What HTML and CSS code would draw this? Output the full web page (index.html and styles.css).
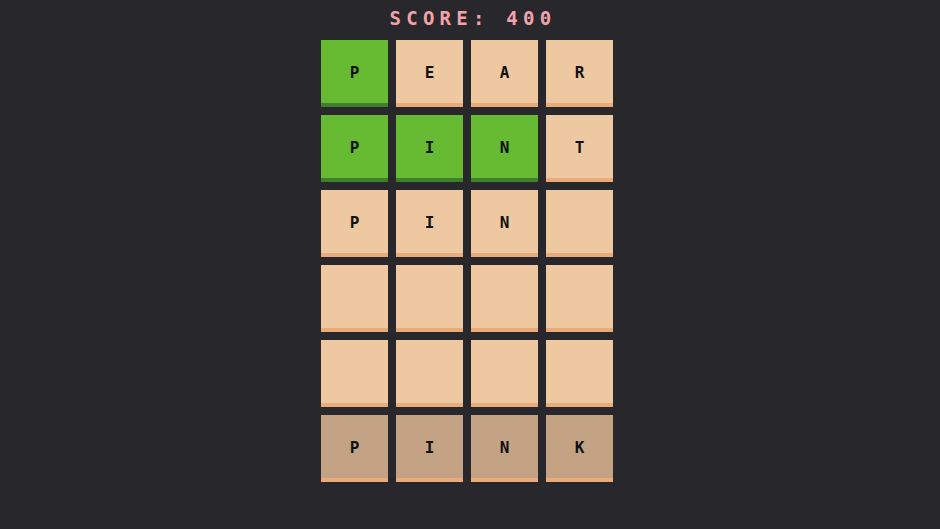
FILE: index.html
```html
<html>
  <head>
    <link rel="stylesheet" href="styles.css">
  </head>
  <body>
    <div class="game">
      <div class="score">SCORE: 400</div>
      <div class="board">
        <div class="tile hit">P</div>
        <div class="tile">E</div>
        <div class="tile">A</div>
        <div class="tile">R</div>

        <div class="tile hit">P</div>
        <div class="tile hit">I</div>
        <div class="tile hit">N</div>
        <div class="tile">T</div>

        <div class="tile">P</div>
        <div class="tile">I</div>
        <div class="tile">N</div>
        <div class="tile"></div>

        <div class="tile"></div>
        <div class="tile"></div>
        <div class="tile"></div>
        <div class="tile"></div>

        <div class="tile"></div>
        <div class="tile"></div>
        <div class="tile"></div>
        <div class="tile"></div>

        <!-- 入力中の行 -->
        <div class="tile input">P</div>
        <div class="tile input">I</div>
        <div class="tile input">N</div>
        <div class="tile input">K</div>
      </div>
    </div>
  </body>
</html>
```

FILE: styles.css
```css
* {
  margin: 0;
  padding: 0;
  box-sizing: border-box;
}
body {
  background-color: #28282c;
  font-family: "DejaVu Sans Mono", monospace;
}
.game {
  display: flex;
  flex-direction: column;
  align-items: center;
  padding-top: 6px;
}
.score {
  color: #f2a3aa;
  font-size: 19px;
  font-weight: bold;
  letter-spacing: 5.25px;
  line-height: 24px;
  height: 34px;
  padding-left: 6px;
}
.board {
  display: grid;
  grid-template-columns: repeat(4, 67px);
  grid-auto-rows: 67px;
  gap: 8px;
  margin-right: 6px;
}
.tile {
  display: flex;
  align-items: center;
  justify-content: center;
  padding-top: 2px;
  background-color: #eec8a0;
  border-bottom: 4px solid #e9ac78;
  color: #111;
  font-size: 16px;
  font-weight: bold;
}
.tile.hit {
  background-color: #66bb33;
  border-bottom-color: #3f7f2c;
}
.tile.input {
  background-color: #c4a385;
  border-bottom-color: #e9ac78;
}
```
